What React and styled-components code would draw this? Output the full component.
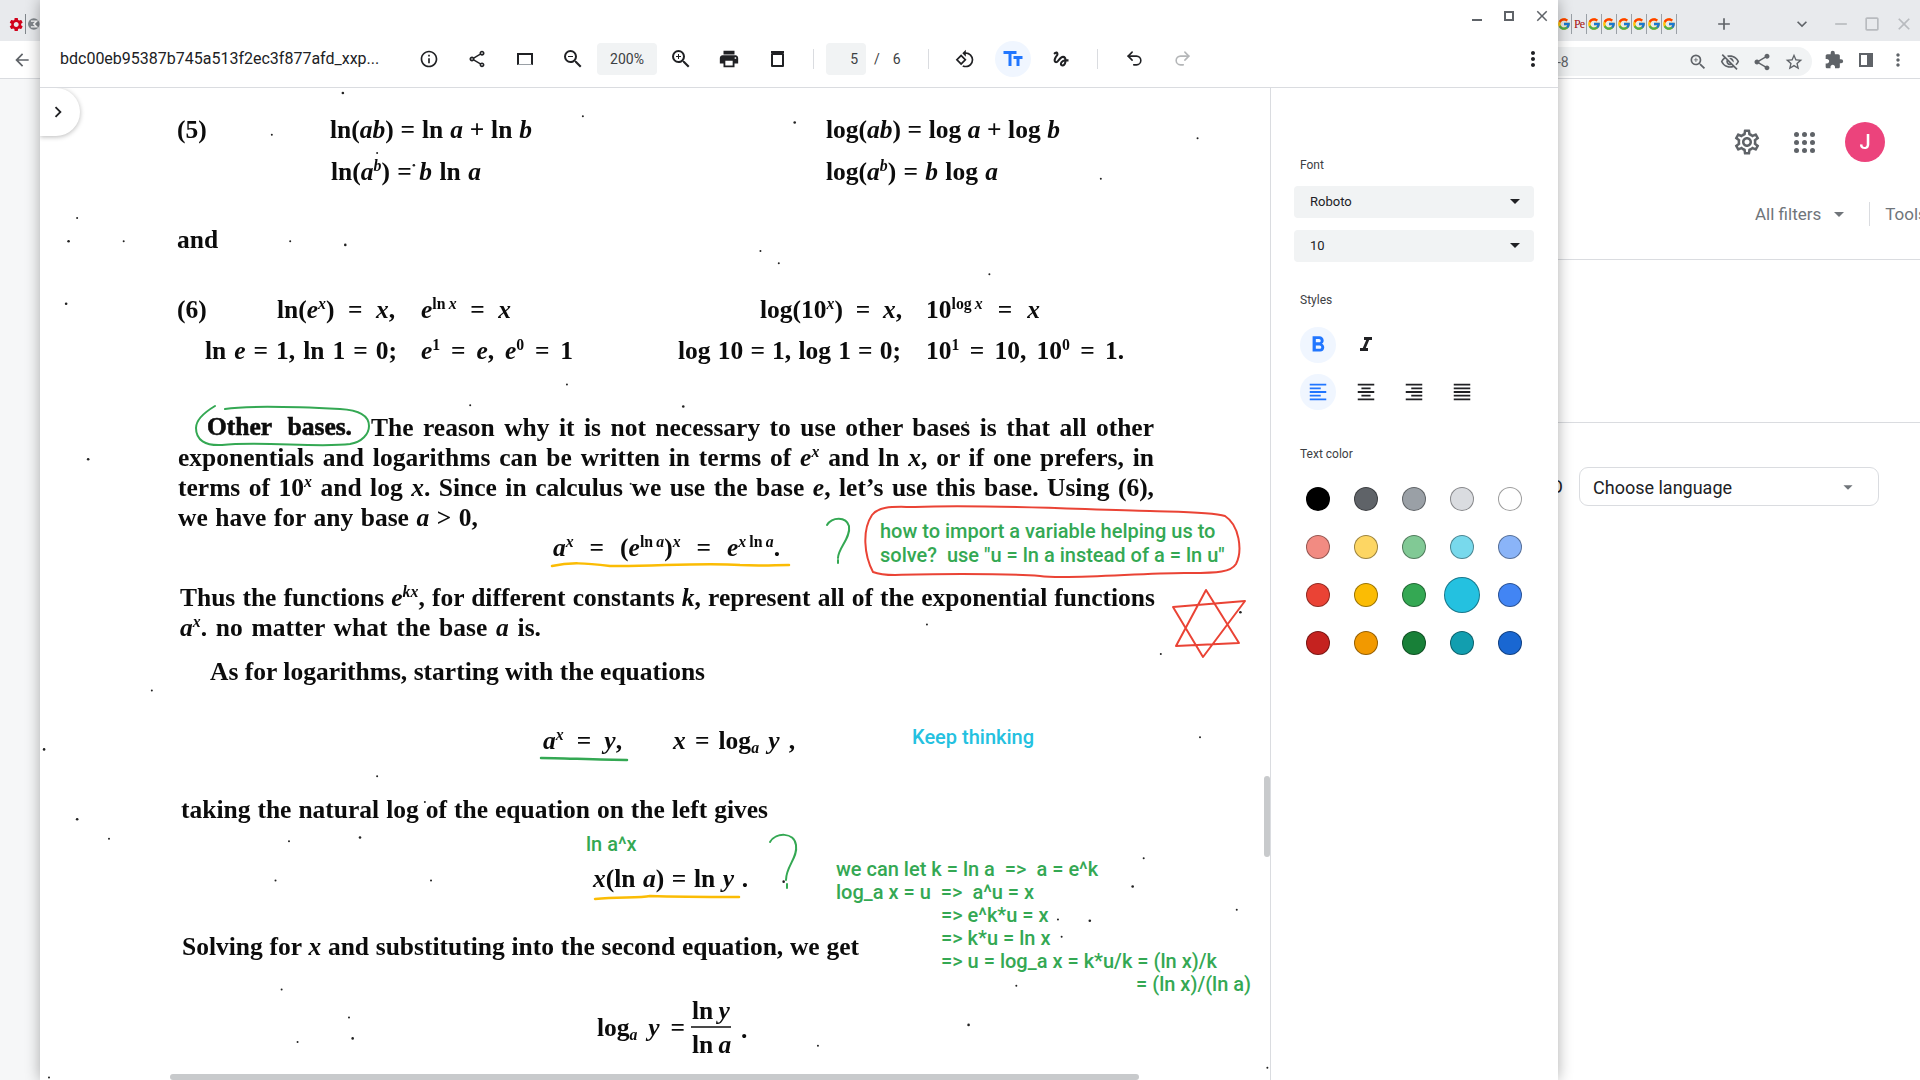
import React from 'react';
import styled, { createGlobalStyle } from 'styled-components';
import { FcGoogle } from 'react-icons/fc';
import { Undo2, Redo2 } from 'lucide-react';
import {
  MdArrowBack, MdInfoOutline, MdOutlineShare, MdZoomIn, MdZoomOut, MdPrint, MdRotate90DegreesCcw,
  MdTextFields, MdGesture, MdMoreVert, MdArrowDropDown, MdFormatBold, MdFormatItalic,
  MdFormatAlignLeft, MdFormatAlignCenter, MdFormatAlignRight, MdFormatAlignJustify, MdChevronRight,
  MdOutlineSettings, MdExtension, MdStarBorder, MdShare, MdAdd, MdExpandMore, MdRemove, MdClose,
  MdCropSquare, MdOutlineVisibilityOff, MdSettings,
} from 'react-icons/md';

const Global = createGlobalStyle`
  html, body { margin: 0; padding: 0; overflow: hidden; background: #fff; }
  body { font-family: Roboto, "Liberation Sans", sans-serif; }
  * { box-sizing: border-box; }
`;

const Desktop = styled.div`
  position: relative; width: 1920px; height: 1080px; overflow: hidden;
  display: grid; grid-template-rows: 41px 38px 1fr;
`;

/* background browser */
const ChromeRow = styled.div`
  display: grid; grid-template-columns: 40px 1517px minmax(0, 1fr);
  background: ${p => p.$bg}; border-bottom: ${p => p.$line ? '1px solid #dadce0' : 'none'};
`;
const LeftCell = styled.div`
  display: flex; align-items: center; color: #5f6368;
  padding: ${p => p.$tabs ? '7px 0 0 8px' : '0 0 0 12px'};
`;
const Tabs = styled.div`display: flex; align-items: center; color: #5f6368; padding-top: 7px;`;
const Fav = styled.div`
  width: 15px; height: 20px; display: flex; align-items: center; justify-content: center;
  border-right: 1px solid #9aa0a6; font: 12px "Liberation Serif", serif; color: #a50e0e; letter-spacing: -1px;
`;
const TabIcon = styled.span`
  display: flex; margin-left: ${p => p.$ml}px; color: ${p => p.$c || '#5f6368'};
`;
const Divide = styled.span`width: 1px; height: 20px; background: #80868b; margin: 0 2px 0 1px;`;
const Tools = styled.div`display: flex; align-items: center; gap: 12px; color: #5f6368;`;
const Omni = styled.div`
  width: 255px; height: 29px; margin-top: 4px; background: #f1f3f4; border-radius: 0 15px 15px 0;
  display: flex; align-items: center; justify-content: space-between; padding-right: 8px;
  font-size: 14px; color: #5f6368; flex-shrink: 0;
`;
const OmniIcons = styled.div`display: flex; gap: 12px;`;
const Panelish = styled.span`width: 14px; height: 14px; border: 2px solid #5f6368; border-right-width: 6px; margin: 3px;`;

const PageRow = styled.div`display: grid; grid-template-columns: 40px 1517px minmax(0, 1fr); min-height: 0;`;
const Gutter = styled.div`background: #f6f7f8;`;
const Behind = styled.div``;
const Results = styled.div`display: flex; flex-direction: column; min-width: 0; overflow: hidden;`;
const HeadSection = styled.div`height: 181px; border-bottom: 1px solid #dadce0;`;
const HeadRow = styled.div`
  height: 126px; display: flex; align-items: center; justify-content: flex-end; padding-right: 35px; color: #5f6368;
`;
const AppsGrid = styled.div`
  display: grid; grid-template-columns: repeat(3, 5px); gap: 3px; margin: 0 30px 0 32px;
`;
const AppDot = styled.span`width: 5px; height: 5px; border-radius: 50%; background: #5f6368;`;
const Avatar = styled.div`
  width: 40px; height: 40px; border-radius: 50%; background: #ec407a; color: #fff; opacity: .98;
  display: flex; align-items: center; justify-content: center; font-size: 20px; font-weight: 500;
`;
const FilterRow = styled.div`
  display: flex; align-items: center; padding-left: 198px; margin-top: -3px; height: 24px; color: #70757a; font-size: 17px; white-space: nowrap;
`;
const FilterDivider = styled.span`width: 1px; height: 24px; background: #dadce0; margin: 0 15px 0 18px; flex-shrink: 0;`;
const MidSection = styled.div`height: 163px; border-bottom: 1px solid #dadce0;`;
const LangRow = styled.div`display: flex; align-items: center; margin-top: 44px; font-size: 18px; color: #202124;`;
const LangHint = styled.span`width: 6px; overflow: hidden; direction: rtl;`;
const LangBox = styled.div`
  width: 300px; height: 39px; margin-left: 16px; border: 1px solid #dadce0; border-radius: 9px;
  display: flex; align-items: center; justify-content: space-between; padding: 1px 19px 0 13px; font-size: 18px;
  color: #202124;
`;

/* pdf window */
const Viewer = styled.div`
  position: absolute; left: 40px; top: 0; width: 1518px; height: 1080px; background: #fff;
  box-shadow: 0 0 14px rgba(0,0,0,.32); display: flex; flex-direction: column;
`;
const Header = styled.header`height: 88px; border-bottom: 1px solid #dadce0; flex-shrink: 0;`;
const WinControls = styled.div`
  height: 32px; display: flex; align-items: center; justify-content: flex-end; color: #5f6368;
  gap: 14px; padding-right: 7px;
`;
const WinMin = styled.span`width: 10px; height: 2px; background: #5f6368; margin: 8px 4px 0 0;`;
const WinMax = styled.span`width: 10px; height: 10px; border: 2px solid #5f6368; margin: 0 5px 0 4px;`;
const Toolbar = styled.div`height: 55px; margin-top: -1px; display: flex; align-items: center; color: #202124;`;
const FileName = styled.div`width: 365px; padding-left: 20px; font-size: 16px; color: #202124; white-space: nowrap;`;
const IconBtn = styled.button`
  width: 48px; height: 48px; padding: 0; border: 0; background: none; display: flex; align-items: center; justify-content: center;
  color: ${p => p.$off ? '#b4b6b8' : '#202124'}; margin-left: ${p => p.$ml || 0}px; flex-shrink: 0;
`;
const Circle = styled.span`
  width: 36px; height: 36px; border-radius: 50%; display: flex; align-items: center; justify-content: center;
  background: ${p => p.$on ? '#f0f6ff' : 'transparent'}; color: ${p => p.$on ? '#2176ff' : '#202124'};
`;
const Field = styled.div`
  height: 32px; width: ${p => p.$w}px; margin-left: ${p => p.$ml || 0}px; background: #f1f3f4; border-radius: 4px;
  display: flex; align-items: center; justify-content: ${p => p.$end ? 'flex-end' : 'center'};
  padding-right: ${p => p.$end ? 8 : 0}px; font-size: 14px; color: #3c4043; flex-shrink: 0;
`;
const BarRule = styled.span`width: 1px; height: 20px; background: #dadce0; margin-left: ${p => p.$ml ?? 12}px; flex-shrink: 0;`;
const PageTotal = styled.div`
  width: 62px; display: flex; align-items: center; gap: 13px; padding-left: 8px; font-size: 14px; color: #3c4043;
`;
const Trash = styled.span`
  width: 13px; height: 14px; border: 2px solid #202124; border-radius: 1px; position: relative; margin-top: 3px;
  &::before { content: ""; position: absolute; left: -2px; right: -2px; top: -4px; height: 2px; background: #202124; }
`;
const FitPage = styled.span`width: 16px; height: 12px; border: 2px solid #202124; border-bottom: 1px solid #9aa0a6;`;
const Body = styled.main`flex: 1; display: flex; min-height: 0;`;

const Canvas = styled.section`flex: 1; position: relative; overflow: hidden;`;
const Ink = styled.svg`position: absolute; inset: 0; pointer-events: none;`;
const Toggle = styled.div`
  position: absolute; left: 0; top: 0; width: 40px; height: 48px; background: #fff; border-radius: 0 24px 24px 0;
  box-shadow: 0 1px 5px rgba(0,0,0,.28); display: flex; align-items: center; padding-left: 7px; color: #202124;
`;
const Line = styled.div`
  position: absolute; left: ${p => p.$x - 40}px; top: ${p => p.$y - 103}px; height: 30px; line-height: 30px;
  width: ${p => p.$w ? p.$w + 'px' : 'auto'};
  white-space: ${p => p.$w ? 'normal' : 'nowrap'};
  text-align: justify; text-align-last: ${p => p.$w ? 'justify' : 'left'};
  font-family: "Liberation Serif", serif; font-size: 25.5px; color: #0c0c0c;
  font-weight: 700;
  -webkit-text-stroke: ${p => p.$bold ? '.6px' : '0'} #0c0c0c;
  filter: blur(.35px);
`;
const V = styled.i``;
const Sup = styled.sup`font-size: .62em; line-height: 0; vertical-align: .55em;`;
const Sub = styled.sub`font-size: .62em; line-height: 0; vertical-align: -.25em;`;
const Note = styled.div`
  position: absolute; left: ${p => p.$x - 40}px; top: ${p => p.$y - 100}px; height: 24px; line-height: 24px; white-space: pre;
  font-family: Roboto, sans-serif; font-weight: 500; font-size: 20px;
  color: ${p => p.$c || '#34a853'};
`;
const Scroll = styled.div`
  position: absolute; background: #c8cacc; border-radius: 3px;
  left: ${p => p.$x - 40}px; top: ${p => p.$y - 88}px; width: ${p => p.$w}px; height: ${p => p.$h}px;
`;

const Side = styled.aside`
  width: 288px; flex-shrink: 0; border-left: 1px solid #dadce0; padding: 69px 0 0 23px;
`;
const Label = styled.div`
  height: 16px; line-height: 16px; font-size: 12px; color: #3c4043; margin: ${p => p.$mt || 0}px 0 0 6px;
`;
const Select = styled.div`
  width: 240px; height: 32px; margin-top: ${p => p.$mt}px; background: #f1f3f4; border-radius: 4px; display: flex;
  align-items: center; justify-content: space-between; padding: 0 7px 2px 16px; font-size: 13px; color: #202124;
`;
const BtnRow = styled.div`display: flex; margin-top: ${p => p.$mt}px; height: 36px;`;
const Cell = styled.div`width: 48px; display: flex; align-items: center; justify-content: center;`;
const Swatches = styled.div`display: grid; grid-template-columns: repeat(5, 48px); grid-auto-rows: 48px; margin-top: 13px;`;
const Swatch = styled.span`
  width: ${p => p.$on ? 36 : 24}px; height: ${p => p.$on ? 36 : 24}px; border-radius: 50%; background: ${p => p.$c};
  border: 1px solid rgba(0,0,0,.38);
`;

const COLORS = [
  ['#000000', '#5f6368', '#9aa0a6', '#dadce0', '#ffffff'],
  ['#f28b82', '#fdd663', '#81c995', '#78d9ec', '#8ab4f8'],
  ['#ea4335', '#fbbc04', '#34a853', '#24c1e0', '#4285f4'],
  ['#c5221f', '#f29900', '#188038', '#129eaf', '#1967d2'],
];

const SPECKS = [[280,76],[222,110],[476,95],[649,100],[978,113],[308,125],[338,135],[899,146],[63,178],[56,197],[101,197],[237,197],[282,200],[621,205],[636,215],[54,248],[808,224],[463,314],[558,332],[384,331],[789,345],[72,375],[515,395],[757,510],[1013,500],[948,534],[124,564],[36,612],[980,602],[308,634],[63,669],[89,685],[236,687],[294,684],[347,655],[934,701],[925,724],[225,719],[352,719],[640,720],[864,751],[867,765],[890,752],[230,808],[285,831],[288,848],[243,851],[668,854],[225,880],[1035,872],[40,880],[791,837],[830,805],[1010,743]];

const a = <V>a</V>, b = <V>b</V>, e = <V>e</V>, x = <V>x</V>, y = <V>y</V>, k = <V>k</V>;

const LINES = [
  { x: 177, y: 130, c: <>(5)</> },
  { x: 330, y: 130, w: 202, c: <>ln({a}{b}) = ln {a} + ln {b}</> },
  { x: 331, y: 172, w: 150, c: <>ln({a}<Sup>{b}</Sup>) = {b} ln {a}</> },
  { x: 826, y: 130, w: 234, c: <>log({a}{b}) = log {a} + log {b}</> },
  { x: 826, y: 172, w: 172, c: <>log({a}<Sup>{b}</Sup>) = {b} log {a}</> },
  { x: 177, y: 240, c: <>and</> },
  { x: 177, y: 310, c: <>(6)</> },
  { x: 277, y: 310, w: 118, c: <>ln({e}<Sup>{x}</Sup>) = {x},</> },
  { x: 421, y: 310, w: 90, c: <>{e}<Sup>ln{'\u2009'}{x}</Sup> = {x}</> },
  { x: 760, y: 310, w: 142, c: <>log(10<Sup>{x}</Sup>) = {x},</> },
  { x: 926, y: 310, w: 114, c: <>10<Sup>log{'\u2009'}{x}</Sup> = {x}</> },
  { x: 205, y: 351, w: 192, c: <>ln {e} = 1, ln 1 = 0;</> },
  { x: 421, y: 351, w: 152, c: <>{e}<Sup>1</Sup> = {e}, {e}<Sup>0</Sup> = 1</> },
  { x: 678, y: 351, w: 223, c: <>log 10 = 1, log 1 = 0;</> },
  { x: 926, y: 351, w: 198, c: <>10<Sup>1</Sup> = 10, 10<Sup>0</Sup> = 1.</> },
  { x: 207, y: 427, w: 145, bold: true, c: <>Other bases.</> },
  { x: 371, y: 428, w: 783, c: <>The reason why it is not necessary to use other bases is that all other</> },
  { x: 178, y: 458, w: 976, c: <>exponentials and logarithms can be written in terms of {e}<Sup>{x}</Sup> and ln {x}, or if one prefers, in</> },
  { x: 178, y: 488, w: 976, c: <>terms of 10<Sup>{x}</Sup> and log {x}. Since in calculus we use the base {e}, let’s use this base. Using (6),</> },
  { x: 178, y: 518, w: 300, c: <>we have for any base {a} &gt; 0,</> },
  { x: 553, y: 548, w: 227, c: <>{a}<Sup>{x}</Sup> = ({e}<Sup>ln{'\u2009'}{a}</Sup>)<Sup>{x}</Sup> = {e}<Sup>{x}{'\u2009'}ln{'\u2009'}{a}</Sup>.</> },
  { x: 180, y: 598, w: 975, c: <>Thus the functions {e}<Sup>{k}{x}</Sup>, for different constants {k}, represent all of the exponential functions</> },
  { x: 180, y: 628, w: 361, c: <>{a}<Sup>{x}</Sup>. no matter what the base {a} is.</> },
  { x: 210, y: 672, w: 495, c: <>As for logarithms, starting with the equations</> },
  { x: 543, y: 741, w: 79, c: <>{a}<Sup>{x}</Sup> = {y},</> },
  { x: 673, y: 741, w: 122, c: <>{x} = log<Sub>{a}</Sub> {y} ,</> },
  { x: 181, y: 810, w: 587, c: <>taking the natural log of the equation on the left gives</> },
  { x: 593, y: 879, w: 155, c: <>{x}(ln {a}) = ln {y} .</> },
  { x: 182, y: 947, w: 677, c: <>Solving for {x} and substituting into the second equation, we get</> },
  { x: 597, y: 1028, w: 88, c: <>log<Sub>{a}</Sub> {y} =</> },
  { x: 692, y: 1011, c: <>ln{'\u2009'}{y}</> },
  { x: 692, y: 1045, c: <>ln{'\u2009'}{a}</> },
  { x: 741, y: 1030, c: <>.</> },
];

const NOTES = [
  { x: 880, y: 531, t: 'how to import a variable helping us to' },
  { x: 880, y: 555, t: 'solve?  use "u = ln a instead of a = ln u"' },
  { x: 912, y: 737, t: 'Keep thinking', c: '#24c1e0' },
  { x: 586, y: 844, t: 'ln a^x' },
  { x: 836, y: 869, t: 'we can let k = ln a  =>  a = e^k' },
  { x: 836, y: 892, t: 'log_a x = u  =>  a^u = x' },
  { x: 941, y: 915, t: '=> e^k*u = x' },
  { x: 941, y: 938, t: '=> k*u = ln x' },
  { x: 941, y: 961, t: '=> u = log_a x = k*u/k = (ln x)/k' },
  { x: 1136, y: 984, t: '= (ln x)/(ln a)' },
];

const G = () => <Fav><FcGoogle size={14} /></Fav>;

export default function App() {
  return (
    <Desktop>
      <Global />
      <ChromeRow $bg="#e8eaed">
        <LeftCell $tabs>
          <MdSettings size={17} color="#d0021b" />
          <Divide />
          <svg width="12" height="14" viewBox="0 0 12 14"><circle cx="6" cy="7" r="6" fill="#80868b" /><path d="M3 4h6L6 7l3 3H3" fill="none" stroke="#fff" strokeWidth="1.5" /></svg>
        </LeftCell>
        <Behind />
        <Tabs>
          <G /><Fav>Pe</Fav><G /><G /><G /><G /><G /><G />
          <TabIcon $ml={37}><MdAdd size={20} /></TabIcon>
          <TabIcon $ml={58}><MdExpandMore size={20} /></TabIcon>
          <TabIcon $ml={19} $c="#b8bbbf"><MdRemove size={20} /></TabIcon>
          <TabIcon $ml={11} $c="#b8bbbf"><MdCropSquare size={20} /></TabIcon>
          <TabIcon $ml={12} $c="#b8bbbf"><MdClose size={20} /></TabIcon>
        </Tabs>
      </ChromeRow>
      <ChromeRow $bg="#fff" $line>
        <LeftCell><MdArrowBack size={20} /></LeftCell>
        <Behind />
        <Tools>
          <Omni>
            <span>-8</span>
            <OmniIcons>
              <MdZoomIn size={20} /><MdOutlineVisibilityOff size={20} /><MdShare size={20} /><MdStarBorder size={20} />
            </OmniIcons>
          </Omni>
          <MdExtension size={20} />
          <Panelish />
          <MdMoreVert size={20} />
        </Tools>
      </ChromeRow>
      <PageRow>
        <Gutter />
        <Behind />
        <Results>
          <HeadSection>
            <HeadRow>
              <MdOutlineSettings size={30} />
              <AppsGrid>{Array.from({ length: 9 }, (_, i) => <AppDot key={i} />)}</AppsGrid>
              <Avatar>J</Avatar>
            </HeadRow>
            <FilterRow>
              All filters<MdArrowDropDown size={24} style={{ marginLeft: 6, flexShrink: 0 }} />
              <FilterDivider />Tools
            </FilterRow>
          </HeadSection>
          <MidSection />
          <LangRow>
            <LangHint>O</LangHint>
            <LangBox>Choose language<MdArrowDropDown size={22} color="#70757a" /></LangBox>
          </LangRow>
        </Results>
      </PageRow>

      <Viewer>
        <Header>
          <WinControls>
            <WinMin /><WinMax /><MdClose size={18} />
          </WinControls>
          <Toolbar>
            <FileName>bdc00eb95387b745a513f2ec3f877afd_xxp...</FileName>
            <IconBtn><MdInfoOutline size={20} /></IconBtn>
            <IconBtn><MdOutlineShare size={20} /></IconBtn>
            <IconBtn><FitPage /></IconBtn>
            <IconBtn><MdZoomOut size={24} /></IconBtn>
            <Field $w={60}>200%</Field>
            <IconBtn><MdZoomIn size={24} /></IconBtn>
            <IconBtn><MdPrint size={22} /></IconBtn>
            <IconBtn><Trash /></IconBtn>
            <BarRule />
            <Field $w={40} $ml={12} $end>5</Field>
            <PageTotal><span>/</span><span>6</span></PageTotal>
            <BarRule $ml={0} />
            <IconBtn $ml={12}><MdRotate90DegreesCcw size={20} /></IconBtn>
            <IconBtn><Circle $on><MdTextFields size={24} /></Circle></IconBtn>
            <IconBtn><MdGesture size={20} /></IconBtn>
            <BarRule />
            <IconBtn $ml={12}><Undo2 size={19} strokeWidth={2} /></IconBtn>
            <IconBtn $off><Redo2 size={19} strokeWidth={2} /></IconBtn>
            <IconBtn $ml={303}><MdMoreVert size={24} /></IconBtn>
          </Toolbar>
        </Header>
        <Body>
          <Canvas>
            {LINES.map((l, i) => (
              <Line key={i} $x={l.x} $y={l.y} $w={l.w} $bold={l.bold}>{l.c}</Line>
            ))}
            {NOTES.map((n, i) => (
              <Note key={i} $x={n.x} $y={n.y} $c={n.c}>{n.t}</Note>
            ))}
            <Ink width="1230" height="992" viewBox="40 88 1230 992" fill="none">
              {SPECKS.map(([sx, sy], i) => (
                <circle key={i} cx={sx * 1.2245} cy={sy * 1.2245} r={i % 3 === 0 ? 1.3 : 1} fill="#222" />
              ))}
              <path d="M691 1027H731" stroke="#0c0c0c" strokeWidth="1.6" />
              <g stroke="#34a853" strokeWidth="2" strokeLinecap="round">
                <path d="M215 406C205 412 196 420 196 428C196 440 205 446 222 445C260 441 320 448 350 444C362 442 369 434 369 426C369 415 358 410 340 409C300 407 250 405 225 409" />
                <path d="M827 525C832 517 846 516 849 526C851 538 838 548 838 558M838 560V563" />
                <path d="M770 842C776 832 794 832 796 845C798 858 786 866 786 880M787 884V888" />
                <path d="M541 758C560 758 600 760 627 760" strokeWidth="2.5" />
              </g>
              <g stroke="#ea4335" strokeWidth="2" strokeLinecap="round">
                <path d="M873 572C864 555 862 530 872 515C880 505 895 507 915 507C990 504 1090 510 1150 511C1180 512 1212 512 1225 516C1239 525 1243 550 1236 564C1231 572 1218 573 1190 573C1150 572 1070 580 1040 576C1000 573 920 574 895 575C885 575 878 574 873 572Z" />
                <path d="M1206 590L1239 643L1176 646ZM1173 607L1245 601L1203 657Z" strokeLinejoin="round" />
              </g>
              <g stroke="#fbbc04" strokeWidth="2.5" strokeLinecap="round">
                <path d="M552 566C570 562 585 563 610 566C650 567 700 562 740 565C760 566 775 565 789 565" />
                <path d="M595 899C620 897 640 898 650 896C680 897 710 897 739 897" />
              </g>
            </Ink>
            <Toggle><MdChevronRight size={22} /></Toggle>
            <Scroll $x={1264} $y={776} $w={6} $h={81} />
            <Scroll $x={170} $y={1074} $w={969} $h={6} />
          </Canvas>
          <Side>
            <Label>Font</Label>
            <Select $mt={13}>Roboto<MdArrowDropDown size={24} /></Select>
            <Select $mt={12}>10<MdArrowDropDown size={24} /></Select>
            <Label $mt={30}>Styles</Label>
            <BtnRow $mt={19}>
              <Cell><Circle $on><MdFormatBold size={26} /></Circle></Cell>
              <Cell><MdFormatItalic size={24} color="#202124" /></Cell>
            </BtnRow>
            <BtnRow $mt={11}>
              <Cell><Circle $on><MdFormatAlignLeft size={22} /></Circle></Cell>
              <Cell><MdFormatAlignCenter size={22} color="#202124" /></Cell>
              <Cell><MdFormatAlignRight size={22} color="#202124" /></Cell>
              <Cell><MdFormatAlignJustify size={22} color="#202124" /></Cell>
            </BtnRow>
            <Label $mt={36}>Text color</Label>
            <Swatches>
              {COLORS.flat().map(c => (
                <Cell key={c}><Swatch $c={c} $on={c === '#24c1e0'} /></Cell>
              ))}
            </Swatches>
          </Side>
        </Body>
      </Viewer>
    </Desktop>
  );
}
